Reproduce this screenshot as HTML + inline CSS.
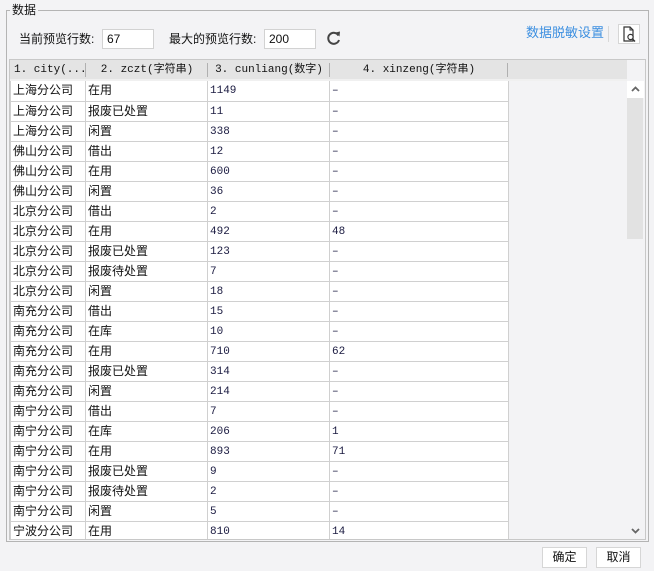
<!DOCTYPE html>
<html><head><meta charset="utf-8">
<style>
*{margin:0;padding:0;box-sizing:border-box}
body{width:654px;height:571px;background:#f3f3f5;font-family:"Liberation Sans","Noto Sans CJK SC",sans-serif;font-size:12px;color:#111;position:relative;overflow:hidden}
.abs{position:absolute}
.group{left:6px;top:10px;width:643px;height:532px;border:1px solid #b4b4b4}
.legend{left:10px;top:2px;background:#f3f3f5;padding:0 2px;font-size:12px;line-height:16px}
.lbl{font-size:12px;line-height:16px}
.inp{background:#fff;border:1px solid #d2d2d2;height:20px;font-size:12px;line-height:18px;padding-left:4px}
.tbox{left:9px;top:59px;width:637px;height:481px;border:1px solid #c8c8c8;background:#f3f3f5;overflow:hidden}
.hdr{left:0;top:0;width:617px;height:21px;background:#e4e4e4;border-bottom:2px solid #f0f0f0}
.hc{position:absolute;top:0;height:20px;line-height:20px;font-family:"Liberation Mono","Noto Sans CJK SC",monospace;font-size:11px;text-align:center;white-space:nowrap;overflow:hidden}
.sep{position:absolute;top:3px;width:1px;height:14px;background:#b0b0b0}
table{position:absolute;left:0;top:21px;border-collapse:collapse;background:#fff;table-layout:fixed}
td{height:20px;border:1px solid #d0d0d0;border-top:none;padding:0 0 0 2px;font-size:12px;line-height:19px;white-space:nowrap;overflow:hidden;vertical-align:middle}
td.n{font-family:"Liberation Mono",monospace;font-size:11px;color:#1a1a40;padding-top:2px;line-height:17px}
.sb{left:617px;top:21px;width:17px;height:460px;background:#f3f3f5}
.btn{background:#fff;border:1px solid #d6d6d6;width:45px;height:21px;text-align:center;line-height:19px;font-size:12px}
</style></head><body>
<div class="abs group"></div>
<div class="abs legend">数据</div>
<div class="abs lbl" style="left:19px;top:31px">当前预览行数:</div>
<div class="abs inp" style="left:102px;top:29px;width:52px">67</div>
<div class="abs lbl" style="left:169px;top:31px">最大的预览行数:</div>
<div class="abs inp" style="left:264px;top:29px;width:52px">200</div>
<svg class="abs" style="left:326px;top:30px" width="16" height="16" viewBox="0 0 16 16"><path d="M12.5 5.5A5.5 5.5 0 1 0 13 10" fill="none" stroke="#444" stroke-width="2"/><path d="M9.5 2.5L14 1.5 13.5 6.5Z" fill="#444"/></svg>
<div class="abs lbl" style="left:526px;top:25px;color:#3c8fe0;font-size:13px">数据脱敏设置</div>
<div class="abs" style="left:608px;top:26px;width:1px;height:16px;background:#d8d8d8"></div>
<div class="abs" style="left:618px;top:24px;width:22px;height:20px;background:#fff;border:1px solid #d6d6d6"></div>
<svg class="abs" style="left:622px;top:26px" width="15" height="17" viewBox="0 0 15 17"><path d="M2 1H8L11 4V15H2Z" fill="none" stroke="#333" stroke-width="1.2"/><path d="M8 1V4H11" fill="none" stroke="#333"/><circle cx="8.5" cy="11" r="2.6" fill="#fff" stroke="#333" stroke-width="1.2"/><path d="M10.5 13L13 15.5" stroke="#333" stroke-width="1.4"/></svg>
<div class="abs tbox">
 <div class="abs hdr">
  <div class="hc" style="left:0;width:75px;text-align:left;padding-left:4px">1. city(...</div><div class="sep" style="left:75px"></div>
  <div class="hc" style="left:76px;width:122px">2. zczt(字符串)</div><div class="sep" style="left:197px"></div>
  <div class="hc" style="left:198px;width:122px">3. cunliang(数字)</div><div class="sep" style="left:319px"></div>
  <div class="hc" style="left:320px;width:178px">4. xinzeng(字符串)</div><div class="sep" style="left:497px"></div>
 </div>
 <table style="width:498px">
 <colgroup><col style="width:75px"><col style="width:122px"><col style="width:122px"><col style="width:179px"></colgroup>
 <tr><td>上海分公司</td><td>在用</td><td class="n">1149</td><td class="n">–</td></tr>
 <tr><td>上海分公司</td><td>报废已处置</td><td class="n">11</td><td class="n">–</td></tr>
 <tr><td>上海分公司</td><td>闲置</td><td class="n">338</td><td class="n">–</td></tr>
 <tr><td>佛山分公司</td><td>借出</td><td class="n">12</td><td class="n">–</td></tr>
 <tr><td>佛山分公司</td><td>在用</td><td class="n">600</td><td class="n">–</td></tr>
 <tr><td>佛山分公司</td><td>闲置</td><td class="n">36</td><td class="n">–</td></tr>
 <tr><td>北京分公司</td><td>借出</td><td class="n">2</td><td class="n">–</td></tr>
 <tr><td>北京分公司</td><td>在用</td><td class="n">492</td><td class="n">48</td></tr>
 <tr><td>北京分公司</td><td>报废已处置</td><td class="n">123</td><td class="n">–</td></tr>
 <tr><td>北京分公司</td><td>报废待处置</td><td class="n">7</td><td class="n">–</td></tr>
 <tr><td>北京分公司</td><td>闲置</td><td class="n">18</td><td class="n">–</td></tr>
 <tr><td>南充分公司</td><td>借出</td><td class="n">15</td><td class="n">–</td></tr>
 <tr><td>南充分公司</td><td>在库</td><td class="n">10</td><td class="n">–</td></tr>
 <tr><td>南充分公司</td><td>在用</td><td class="n">710</td><td class="n">62</td></tr>
 <tr><td>南充分公司</td><td>报废已处置</td><td class="n">314</td><td class="n">–</td></tr>
 <tr><td>南充分公司</td><td>闲置</td><td class="n">214</td><td class="n">–</td></tr>
 <tr><td>南宁分公司</td><td>借出</td><td class="n">7</td><td class="n">–</td></tr>
 <tr><td>南宁分公司</td><td>在库</td><td class="n">206</td><td class="n">1</td></tr>
 <tr><td>南宁分公司</td><td>在用</td><td class="n">893</td><td class="n">71</td></tr>
 <tr><td>南宁分公司</td><td>报废已处置</td><td class="n">9</td><td class="n">–</td></tr>
 <tr><td>南宁分公司</td><td>报废待处置</td><td class="n">2</td><td class="n">–</td></tr>
 <tr><td>南宁分公司</td><td>闲置</td><td class="n">5</td><td class="n">–</td></tr>
 <tr><td>宁波分公司</td><td>在用</td><td class="n">810</td><td class="n">14</td></tr>
 </table>
 <div class="abs sb">
  <div class="abs" style="left:0;top:0;width:17px;height:17px;background:#fff"></div>
  <svg class="abs" style="left:4px;top:5px" width="9" height="6" viewBox="0 0 9 6"><path d="M1 5L4.5 1.5 8 5" fill="none" stroke="#666" stroke-width="1.8"/></svg>
  <div class="abs" style="left:0;top:17px;width:16px;height:141px;background:#e2e2e2"></div>
  <div class="abs" style="left:0;top:442px;width:17px;height:17px;background:#f3f3f5"></div>
  <svg class="abs" style="left:4px;top:447px" width="9" height="6" viewBox="0 0 9 6"><path d="M1 1L4.5 4.5 8 1" fill="none" stroke="#666" stroke-width="1.8"/></svg>
 </div>
</div>
<div class="abs btn" style="left:542px;top:547px">确定</div>
<div class="abs btn" style="left:596px;top:547px">取消</div>
</body></html>
